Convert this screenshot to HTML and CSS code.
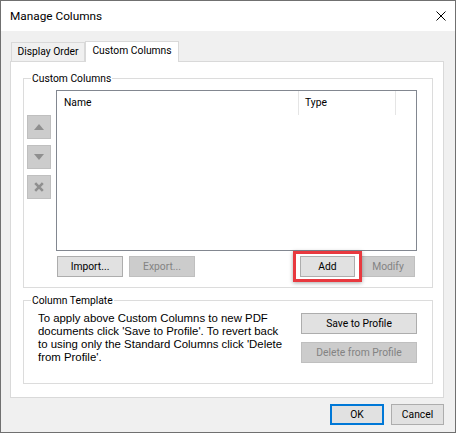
FILE: index.html
```html
<!DOCTYPE html>
<html>
<head>
<meta charset="utf-8">
<link rel="stylesheet" href="styles.css">
</head>
<body>
<div class="win">
  <div class="titlebar">
    <span class="title">Manage Columns</span>
    <svg class="close" width="10" height="10" viewBox="0 0 10 10"><path d="M0.5 0.5 L9.5 9.5 M9.5 0.5 L0.5 9.5" stroke="#000" stroke-width="1"/></svg>
  </div>
  <div class="content">
    <div class="tabs">
      <div class="tab">Display Order</div>
      <div class="tab active">Custom Columns</div>
    </div>
    <div class="panel">
      <div class="group g1">
        <div class="legend">Custom Columns</div>
        <div class="g1-body">
          <div class="side">
            <div class="sbtn"><svg width="12" height="8" viewBox="0 0 12 8"><path d="M6 1 L11 7 L1 7 Z" fill="#8f8f8f"/></svg></div>
            <div class="sbtn"><svg width="12" height="8" viewBox="0 0 12 8"><path d="M1 1 L11 1 L6 7 Z" fill="#8f8f8f"/></svg></div>
            <div class="sbtn"><svg width="10" height="10" viewBox="0 0 10 10"><path d="M1.2 1.2 L8.8 8.8 M8.8 1.2 L1.2 8.8" stroke="#8f8f8f" stroke-width="2.6"/></svg></div>
          </div>
          <div class="main">
            <div class="list">
              <div class="lhead">
                <div class="col c-name">Name</div>
                <div class="col c-type">Type</div>
                <div class="col c-rest"></div>
              </div>
            </div>
            <div class="btnrow">
              <button class="btn b-import">Import...</button>
              <button class="btn b-export" disabled>Export...</button>
              <button class="btn b-add hl">Add</button>
              <button class="btn b-modify" disabled>Modify</button>
            </div>
          </div>
        </div>
      </div>
      <div class="group g2">
        <div class="legend">Column Template</div>
        <div class="g2-body">
          <p class="desc">To apply above Custom Columns to new PDF<br>documents click 'Save to Profile'. To revert back<br>to using only the Standard Columns click 'Delete<br>from Profile'.</p>
          <div class="g2-btns">
            <button class="btn b-wide">Save to Profile</button>
            <button class="btn b-wide" disabled>Delete from Profile</button>
          </div>
        </div>
      </div>
    </div>
    <div class="footer">
      <button class="btn b-ok">OK</button>
      <button class="btn b-cancel">Cancel</button>
    </div>
  </div>
</div>
</body>
</html>
```
FILE: styles.css
```css
* { box-sizing: border-box; }
html, body { margin: 0; padding: 0; background: #fff; }
body { font-family: Roboto, "Liberation Sans", sans-serif; font-size: 10.3px; color: #000; }

.win {
  width: 456px;
  height: 433px;
  border: 1px solid #707070;
  background: #f0f0f0;
  display: flex;
  flex-direction: column;
}

.titlebar {
  height: 30px;
  background: #fff;
  display: flex;
  align-items: center;
  justify-content: space-between;
  padding: 0 9px 0 9px;
}
.title { font-size: 11.8px; line-height: 16px; }
.close { display: block; margin-top: 0; }

.content {
  flex: 1;
  padding: 10px 11px 0 9px;
}

.tabs {
  display: flex;
  align-items: flex-end;
  height: 20px;
}
.tab {
  height: 19px;
  border: 1px solid #d9d9d9;
  border-bottom: none;
  background: #f0f0f0;
  line-height: 17px;
  text-align: center;
  margin-left: 1px;
  width: 74px;
}
.tab.active {
  position: relative;
  z-index: 1;
  height: 21px;
  margin-bottom: -1px;
  margin-left: 0;
  width: 94px;
  background: #fff;
  line-height: 18px;
}

.panel {
  height: 337px;
  background: #fff;
  border: 1px solid #d9d9d9;
  padding: 16px 10px 0 12px;
}

.group {
  border: 1px solid #dcdcdc;
}
.g1 { height: 210px; }
.g2 { height: 84px; margin-top: 12px; }

.legend {
  margin: -8px 0 0 7px;
  padding: 0 1px;
  width: fit-content;
  background: #fff;
  line-height: 15px;
}

.g1-body {
  display: flex;
  gap: 5px;
  padding-left: 3px;
  margin-top: 4px;
}
.side {
  width: 24px;
  padding-top: 25px;
  display: flex;
  flex-direction: column;
  gap: 6px;
}
.sbtn {
  width: 24px;
  height: 24px;
  background: #cccccc;
  border: 1px solid #bfbfbf;
  display: flex;
  align-items: center;
  justify-content: center;
}
.sbtn svg { display: block; }

.main { width: 361px; }
.list {
  height: 161px;
  border: 1px solid #828790;
  background: #fff;
}
.lhead {
  display: flex;
  height: 24px;
}
.col {
  line-height: 24px;
  border-right: 1px solid #e5e5e5;
}
.c-name { width: 242px; padding-left: 7px; }
.c-type { width: 97px; padding-left: 6px; }
.c-rest { flex: 1; border-right: none; }

.btn {
  font-family: Roboto, "Liberation Sans", sans-serif;
  font-size: 10.3px;
  color: #000;
  background: #e1e1e1;
  border: 1px solid #adadad;
  height: 21px;
  padding: 0;
  margin: 0;
  line-height: 19px;
  text-align: center;
  border-radius: 0;
}
.btn:disabled {
  background: #cccccc;
  border-color: #bfbfbf;
  color: #838383;
}

.btnrow {
  display: flex;
  margin-top: 5px;
  padding: 0 2px 0 1px;
}
.b-import { width: 66px; }
.b-export { width: 66px; margin-left: 6px; }
.b-add { width: 55px; margin-left: auto; }
.b-modify { width: 54px; margin-left: 6px; }

.hl { position: relative; }
.hl::after {
  content: "";
  position: absolute;
  top: -6px;
  bottom: -6px;
  left: -8px;
  right: -8px;
  border: 3px solid #e8393f;
  box-shadow: 0 1px 4px rgba(0, 0, 0, 0.35);
}

.g2-body {
  display: flex;
  justify-content: space-between;
}
.desc {
  margin: 4px 0 0 14px;
  font-family: "Liberation Sans", Arial, sans-serif;
  font-size: 11.4px;
  line-height: 13px;
  white-space: nowrap;
}
.g2-btns {
  margin: 5px 15px 0 0;
  display: flex;
  flex-direction: column;
  gap: 8px;
}
.b-wide { width: 116px; }

.footer {
  display: flex;
  justify-content: flex-end;
  gap: 7px;
  margin-top: 6px;
}
.b-ok { width: 54px; border: 2px solid #0078d7; line-height: 17px; }
.b-cancel { width: 53px; }
```
